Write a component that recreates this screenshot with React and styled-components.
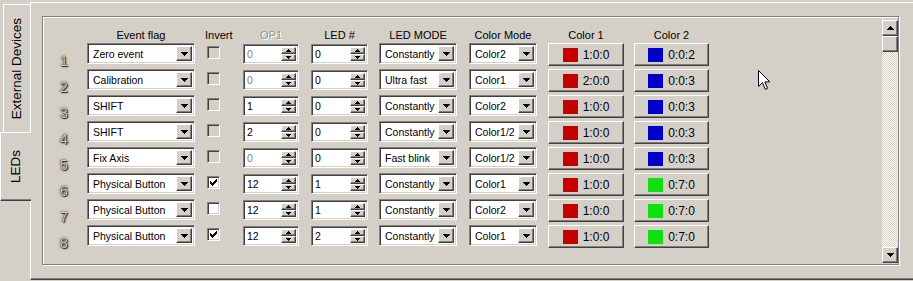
import React from 'react';
import styled, { createGlobalStyle, css } from 'styled-components';

const GlobalStyle = createGlobalStyle`
  html, body {
    margin: 0;
    padding: 0;
    background: #d4d0c8;
  }
  body {
    font-family: "Liberation Sans", Arial, sans-serif;
    font-size: 10.5px;
    color: #000;
    overflow: hidden;
  }
`;

const RED = '#c40000';
const BLUE = '#0000c8';
const GREEN = '#10e010';

const rows = [
  { flag: 'Zero event', inv: 'off', op1: '0', op1Off: true, led: '0', mode: 'Constantly', cmode: 'Color2', c1: '1:0:0', c2: '0:0:2', c2col: BLUE },
  { flag: 'Calibration', inv: 'off', op1: '0', op1Off: true, led: '0', mode: 'Ultra fast', cmode: 'Color1', c1: '2:0:0', c2: '0:0:3', c2col: BLUE },
  { flag: 'SHIFT', inv: 'off', op1: '1', led: '0', mode: 'Constantly', cmode: 'Color2', c1: '1:0:0', c2: '0:0:3', c2col: BLUE },
  { flag: 'SHIFT', inv: 'off', op1: '2', led: '0', mode: 'Constantly', cmode: 'Color1/2', c1: '1:0:0', c2: '0:0:3', c2col: BLUE },
  { flag: 'Fix Axis', inv: 'off', op1: '0', op1Off: true, led: '0', mode: 'Fast blink', cmode: 'Color1/2', c1: '1:0:0', c2: '0:0:3', c2col: BLUE },
  { flag: 'Physical Button', inv: 'checked', op1: '12', led: '1', mode: 'Constantly', cmode: 'Color1', c1: '1:0:0', c2: '0:7:0', c2col: GREEN },
  { flag: 'Physical Button', inv: 'empty', op1: '12', led: '1', mode: 'Constantly', cmode: 'Color2', c1: '1:0:0', c2: '0:7:0', c2col: GREEN },
  { flag: 'Physical Button', inv: 'checked', op1: '12', led: '2', mode: 'Constantly', cmode: 'Color1', c1: '1:0:0', c2: '0:7:0', c2col: GREEN },
];

const sunken = css`
  box-sizing: border-box;
  border: 1px solid;
  border-color: #808080 #fff #fff #808080;
  box-shadow: inset 1px 1px #404040, inset -1px -1px #d4d0c8;
`;

const raised = css`
  box-sizing: border-box;
  border: 1px solid;
  border-color: #fff #404040 #404040 #fff;
  box-shadow: inset -1px -1px #808080;
  background: #d4d0c8;
`;

// arrows drawn pixel by pixel
const Arrow = ({ up, small }) => {
  const d = small
    ? 'M0 0h5v1h-1v1h-1v1h-1v-1h-1v-1h-1z'
    : 'M0 0h7v1h-1v1h-1v1h-1v1h-1v-1h-1v-1h-1v-1h-1z';
  const w = small ? 5 : 7;
  const h = small ? 3 : 4;
  return (
    <svg width={w} height={h} viewBox={`0 0 ${w} ${h}`} shapeRendering="crispEdges"
      style={up ? { transform: 'rotate(180deg)' } : undefined}>
      <path d={d} fill="#000" />
    </svg>
  );
};

const CHECK = [
  '......X',
  '.....XX',
  'X...XXX',
  'XX.XXX.',
  'XXXXX..',
  '.XXX...',
  '..X....',
];

const CheckMark = () => (
  <svg width="7" height="7" viewBox="0 0 7 7" shapeRendering="crispEdges">
    {CHECK.flatMap((line, y) =>
      line.split('').map((c, x) => (c === 'X' ? <rect key={`${x}-${y}`} x={x} y={y} width="1" height="1" fill="#000" /> : null))
    )}
  </svg>
);

const Window = styled.div`
  position: relative;
  width: 913px;
  height: 281px;
  display: flex;
  align-items: flex-start;
  overflow: hidden;
`;

const TabStrip = styled.div`
  width: 30px;
  display: flex;
  flex-direction: column;
  align-items: flex-end;
  padding-top: 4px;
  position: relative;
  z-index: 1;
`;

const Tab = styled.div`
  box-sizing: border-box;
  display: flex;
  align-items: center;
  justify-content: center;
  background: #d4d0c8;
  border-top: 1px solid #fff;
  border-left: 1px solid #fff;
  font-size: 13.5px;
  ${p => p.$active ? css`
    width: 31px;
    height: 69px;
    margin-right: -1px;
    border-bottom: 1px solid #404040;
    box-shadow: inset 0 -1px #808080;
  ` : css`
    width: 27px;
    height: 128px;
  `}
`;

const TabLabel = styled.span`
  writing-mode: vertical-rl;
  transform: rotate(180deg);
  white-space: nowrap;
  padding-left: 2px;
`;

const Page = styled.div`
  box-sizing: border-box;
  flex: 1;
  height: 278px;
  margin-top: 2px;
  border-top: 1px solid #fff;
  border-left: 1px solid #fff;
  border-bottom: 1px solid #404040;
  box-shadow: inset 0 -1px #808080;
`;

const GroupBox = styled.div`
  box-sizing: border-box;
  width: 857px;
  height: 249px;
  margin: 13px 0 0 11px;
  border: 1px solid #808080;
  box-shadow: inset 1px 1px #fff, 1px 1px #fff;
  display: flex;
`;

const Table = styled.div`
  flex: 1;
  display: grid;
  grid-template-columns: 44px 118px 38px 68px 68px 90px 79px 86px 76px;
  grid-template-rows: 14px;
  grid-auto-rows: 26px;
  align-items: start;
  padding-top: 12px;
`;

const Header = styled.div`
  width: ${p => p.$w}px;
  line-height: 13px;
  font-size: 11px;
  text-align: center;
  white-space: nowrap;
  ${p => p.$disabled && css`
    color: #9a968f;
    text-shadow: 1px 1px #fff;
  `}
`;

const RowNum = styled.div`
  padding: 11px 0 0 17px;
  font-size: 14px;
  line-height: 15px;
  color: #d0ccc4;
  text-shadow: 0 0 1px #111, 1px 1px 1px #222, 0 0 3px #555;
`;

const Combo = styled.div`
  ${sunken}
  width: ${p => p.$w}px;
  height: 21px;
  background: #fff;
  display: flex;
  align-items: stretch;
  padding: 2px;
`;

const FieldText = styled.span`
  flex: 1;
  display: flex;
  align-items: center;
  padding-left: ${p => p.$pad ?? 3}px;
  white-space: nowrap;
  overflow: hidden;
  color: ${p => (p.$disabled ? '#808080' : '#000')};
`;

const DropButton = styled.div`
  ${raised}
  width: 16px;
  display: flex;
  align-items: center;
  justify-content: center;
  padding-top: 1px;
`;

const Spin = styled.div`
  ${sunken}
  width: ${p => p.$w}px;
  height: 20px;
  margin-top: 1px;
  background: #fff;
  display: flex;
  padding: 2px;
`;

const SpinButtons = styled.div`
  width: 15px;
  display: flex;
  flex-direction: column;
`;

const SpinButton = styled.div`
  ${raised}
  flex: 1;
  display: flex;
  align-items: center;
  justify-content: center;
`;

const Checkbox = styled.div`
  ${sunken}
  width: 13px;
  height: 13px;
  margin: 3px 0 0 2px;
  background: ${p => (p.$disabled ? '#d4d0c8' : '#fff')};
  display: flex;
  align-items: center;
  justify-content: center;
`;

const ColorButton = styled.div`
  ${raised}
  width: ${p => p.$w}px;
  height: 23px;
  display: flex;
  align-items: center;
  justify-content: center;
  gap: 5px;
  font-size: 12px;
`;

const Swatch = styled.span`
  width: 15px;
  height: 14px;
  background: ${p => p.$color};
`;

const ScrollBar = styled.div`
  width: 16px;
  margin: 3px 0 1px auto;
  display: flex;
  flex-direction: column;
  background: repeating-conic-gradient(#fff 0 25%, #d4d0c8 0 50%) 0 0 / 2px 2px;
`;

const ScrollButton = styled.div`
  ${raised}
  height: 16px;
  display: flex;
  align-items: center;
  justify-content: center;
`;

const Track = styled.div`
  flex: 1;
`;

const Cursor = styled.svg`
  position: absolute;
  left: 758px;
  top: 70px;
`;

const ComboBox = ({ w, text }) => (
  <Combo $w={w}>
    <FieldText>{text}</FieldText>
    <DropButton><Arrow /></DropButton>
  </Combo>
);

const SpinBox = ({ w, value, disabled }) => (
  <Spin $w={w}>
    <FieldText $pad={1} $disabled={disabled}>{value}</FieldText>
    <SpinButtons>
      <SpinButton><Arrow up small /></SpinButton>
      <SpinButton><Arrow small /></SpinButton>
    </SpinButtons>
  </Spin>
);

export default function App() {
  return (
    <Window>
      <GlobalStyle />
      <TabStrip>
        <Tab><TabLabel>External Devices</TabLabel></Tab>
        <Tab $active><TabLabel>LEDs</TabLabel></Tab>
      </TabStrip>
      <Page>
        <GroupBox>
          <Table>
            <div />
            <Header $w={108}>Event flag</Header>
            <Header $w={27}>Invert</Header>
            <Header $w={56} $disabled>OP1</Header>
            <Header $w={57}>LED #</Header>
            <Header $w={78}>LED MODE</Header>
            <Header $w={68}>Color Mode</Header>
            <Header $w={76}>Color 1</Header>
            <Header $w={75}>Color 2</Header>
            {rows.map((r, i) => (
              <React.Fragment key={i}>
                <RowNum>{i + 1}</RowNum>
                <ComboBox w={108} text={r.flag} />
                <Checkbox $disabled={r.inv === 'off'}>
                  {r.inv === 'checked' && <CheckMark />}
                </Checkbox>
                <SpinBox w={56} value={r.op1} disabled={r.op1Off} />
                <SpinBox w={57} value={r.led} />
                <ComboBox w={78} text={r.mode} />
                <ComboBox w={68} text={r.cmode} />
                <ColorButton $w={76}><Swatch $color={RED} />{r.c1}</ColorButton>
                <ColorButton $w={75}><Swatch $color={r.c2col} />{r.c2}</ColorButton>
              </React.Fragment>
            ))}
          </Table>
          <ScrollBar>
            <ScrollButton><Arrow up /></ScrollButton>
            <ScrollButton />
            <Track />
            <ScrollButton><Arrow /></ScrollButton>
          </ScrollBar>
        </GroupBox>
      </Page>
      <Cursor width="13" height="21" viewBox="0 0 13 21">
        <path d="M0.5 0.5V16.5L4.5 12.6L7.3 19.4L9.6 18.4L6.9 11.9H11.9Z" fill="#fff" stroke="#000" strokeWidth="1" strokeLinejoin="miter" />
      </Cursor>
    </Window>
  );
}
